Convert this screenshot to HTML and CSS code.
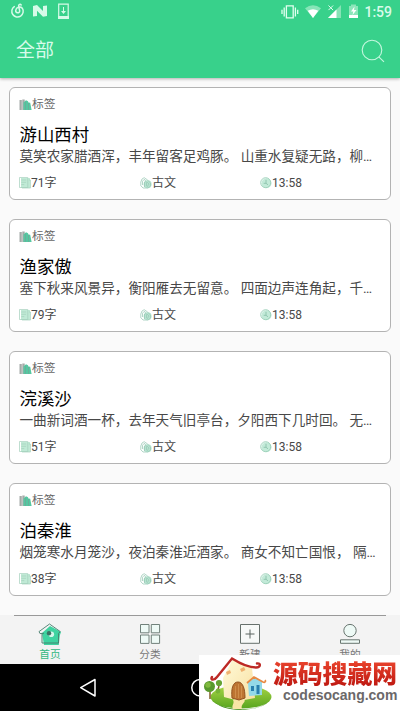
FILE: index.html
```
<!DOCTYPE html>
<html lang="zh-CN">
<head>
<meta charset="utf-8">
<title>全部</title>
<link rel="stylesheet" href="styles.css">
</head>
<body>
<svg class="defs" aria-hidden="true">
  <symbol id="tag" viewBox="0 0 13 12">
    <path d="M.5 1h2.3v10H.5zM3.3.5h2.4V11H3.3z" fill="#a5aaa8"/>
    <path d="M4.5 3.5 7 1.2l2 1 .4 1.3 1.8.2L12.6 11H4.5z" fill="#55c7a1"/>
    <path d="M6.5 3v8M9.5 4v7" stroke="#7c9990" stroke-width=".5"/>
  </symbol>
  <symbol id="words" viewBox="0 0 12 12">
    <path d="M2 1h9v10H2z" fill="#c0ead6"/>
    <path d="M.5.5h8.3v10H.5zM2.3 3h4.8M2.3 5.3h4.8M2.3 7.6h3M10 3h1.5v8H3" fill="none" stroke="#a3d0bb" stroke-width=".7"/>
  </symbol>
  <symbol id="kind" viewBox="0 0 12 12">
    <circle cx="7.6" cy="7.3" r="4" fill="#b5e3cf"/>
    <path d="M4.2.7 7 2.6 10.5 6v3L8 11H3L.8 8.7V5L2 2zM2.5 8V4.2l2-2 2 3.5V9M4.5 5v5M7 5l2 2-2 3" fill="none" stroke="#9ac8b5" stroke-width=".75"/>
  </symbol>
  <symbol id="clock" viewBox="0 0 12 12">
    <circle cx="6.5" cy="6.3" r="5" fill="#c2ead8"/>
    <circle cx="5.7" cy="5.7" r="5" fill="none" stroke="#9bcfb8" stroke-width=".9"/>
    <path d="M6 2.8v3.5H3.7M6 6.3l2 1.5" fill="none" stroke="#8cc2ab" stroke-width=".9"/>
  </symbol>
</svg>
<div class="screen">
  <header class="top">
    <div class="status">
      <svg class="status-left" viewBox="0 0 64 20" width="64" height="20">
        <g fill="none" stroke="#d6fae8" stroke-width="1.5" stroke-linecap="round">
          <path d="M5.3 6.6A5.7 5.7 0 1 0 13.3 8.2C11.6 6.3 7.2 7 6.7 10.3c-.3 3 4 3.4 4 .6L9.6 6.1c-.2-1.7 1.7-2.2 2.6-1.2"/>
        </g>
        <path d="M24 6l4-1 6 6V6l4-.5V16l-4 .8-6-6V16l-4 .5z" fill="#d6fae8"/>
        <path d="M49.7 4.2h9.5v14h-9.5z" fill="none" stroke="#d6fae8" stroke-width="1.2"/>
        <path d="M49 16h11v3H49zM54 7h1v4h2l-2.5 3L52 11h2z" fill="#d6fae8"/>
      </svg>
      <svg class="status-right" viewBox="0 0 80 20" width="80" height="20">
        <path d="M6.4 5.8h6.8v12H6.4zM4.2 7.5v9M15.4 7.5v9M2 9.8v4.2M17.7 9.8v4.2" fill="none" stroke="#e2fff0" stroke-width="1.3"/>
        <path d="M25 8.3q8-6 16 0L33 18z" fill="#87e5b8"/>
        <path d="M27.7 10.7q5.3-3 10.6 0L33 18z" fill="#fff"/>
        <path d="M61 5v13H48z" fill="#86e3b6"/>
        <path d="M56.5 9.5V18H48z" fill="#fff"/>
        <path d="m48.5 5.5 4.6 4.6m0-4.6-4.6 4.6" stroke="#e2fff0"/>
        <path d="M69 6h2V4.5h5V6h2v12h-9z" fill="#8ce6ba"/>
        <path d="M69 15h9v3h-9zM74.5 6.5 71 11.5h2.3l-.8 3.5 4-5H74z" fill="#fff"/>
      </svg>
      <span class="time">1:59</span>
    </div>
    <div class="toolbar">
      <h1>全部</h1>
      <svg width="24" height="24" viewBox="0 0 24 24"><circle cx="11" cy="11" r="9.8"/><path d="m17.8 17.8 5.2 5"/></svg>
    </div>
  </header>
  <main class="list">
    <article class="card">
      <div class="tag"><svg><use href="#tag"/></svg>标签</div>
      <h2>游山西村</h2>
      <p>莫笑农家腊酒浑，丰年留客足鸡豚。 山重水复疑无路，柳…</p>
      <div class="meta"><span><svg><use href="#words"/></svg>71字</span><span><svg><use href="#kind"/></svg>古文</span><span><svg><use href="#clock"/></svg>13:58</span></div>
    </article>
    <article class="card">
      <div class="tag"><svg><use href="#tag"/></svg>标签</div>
      <h2>渔家傲</h2>
      <p>塞下秋来风景异，衡阳雁去无留意。 四面边声连角起，千…</p>
      <div class="meta"><span><svg><use href="#words"/></svg>79字</span><span><svg><use href="#kind"/></svg>古文</span><span><svg><use href="#clock"/></svg>13:58</span></div>
    </article>
    <article class="card">
      <div class="tag"><svg><use href="#tag"/></svg>标签</div>
      <h2>浣溪沙</h2>
      <p>一曲新词酒一杯，去年天气旧亭台，夕阳西下几时回。 无…</p>
      <div class="meta"><span><svg><use href="#words"/></svg>51字</span><span><svg><use href="#kind"/></svg>古文</span><span><svg><use href="#clock"/></svg>13:58</span></div>
    </article>
    <article class="card">
      <div class="tag"><svg><use href="#tag"/></svg>标签</div>
      <h2>泊秦淮</h2>
      <p>烟笼寒水月笼沙，夜泊秦淮近酒家。 商女不知亡国恨， 隔…</p>
      <div class="meta"><span><svg><use href="#words"/></svg>38字</span><span><svg><use href="#kind"/></svg>古文</span><span><svg><use href="#clock"/></svg>13:58</span></div>
    </article>
  </main>
  <nav class="tabs">
    <a class="active">
      <svg viewBox="0 0 24 22">
        <path d="M4 10 12 3l11 6-1.2 3.5-1 9.5H6z" fill="#3fd3a0"/>
        <path d="M1 8.6 11.5 1 22.3 8.6 20.5 10.4V20H4V10.4L2 10.6zM4 10.4h2" fill="none" stroke="#477e6d" stroke-width=".9"/>
        <circle cx="13.3" cy="11.2" r="2.8" fill="#d4f7ea"/><circle cx="11" cy="10.2" r="2.2" fill="#3b7263"/>
      </svg>首页</a>
    <a>
      <svg viewBox="0 0 24 22"><path d="M2.5 1.5H11v8.3H2.5zM13.3 1.5h8.3v8.3h-8.3zM2.5 12H11v8.4H2.5zM13.3 12h8.3v8.4h-8.3z" fill="#eefaf6" stroke="#71817b"/></svg>分类</a>
    <a>
      <svg viewBox="0 0 24 22"><path d="M2.5 1.5h19v18.8h-19z" fill="#f7f9f8" stroke="#66706c"/><path d="M12 6.5v9M7.5 11h9" stroke="#58635e"/></svg>新建</a>
    <a>
      <svg viewBox="0 0 24 22"><g fill="#eefaf6" stroke="#68756f"><circle cx="12" cy="7.6" r="6.2"/><path d="M2.5 16.8h19v3.5h-19z"/></g></svg>我的</a>
  </nav>
  <div class="system">
    <svg viewBox="0 0 400 47" width="400" height="47"><g fill="none" stroke="#fff" stroke-width="1.5" stroke-linejoin="round"><path d="M95 15.5v16.5L80.7 23.7z"/><circle cx="200" cy="23.7" r="8.2"/></g></svg>
  </div>
  <div class="watermark">
    <svg viewBox="0 0 74 56" width="74" height="56">
      <defs>
        <linearGradient id="wall" x2="1" y2="1"><stop stop-color="#fffbd9"/><stop offset="1" stop-color="#f8dfa1"/></linearGradient>
        <linearGradient id="grass" x2="0" y2="1"><stop stop-color="#a8d545"/><stop offset="1" stop-color="#58a51f"/></linearGradient>
      </defs>
      <ellipse cx="42" cy="42" rx="30.5" ry="11.5" fill="url(#grass)"/>
      <path d="M13 44c7 12 45 14 56 3-7 9-46 13-56-3z" fill="#438e1b"/>
      <path d="M24 23 34 4l19 9 3 30-16 3-15-4z" fill="url(#wall)"/>
      <path d="M34 54c-2-4 2-5 0-9l11-1c3 3-4 5-2 10z" fill="#f8e5a6"/>
      <path d="M33 43c-1-10 1-16 6-16s7 7 7 16l-6 2z" fill="#bd7432" stroke="#935220"/>
      <path d="M36.5 31v12M39.5 29v14M42.5 31v12" stroke="#d79855" stroke-width=".7"/>
      <path d="m27 17 4-2 1 3-4 2zM41 14l4-2 1.5 3-4 2z" fill="#efb16f"/>
      <path d="M49 28 56 22l7 5v13l-13 1z" fill="#93d9e8"/>
      <path d="M52 31h3v5h-3zM57.5 30h3v9h-3z" fill="#287fae"/>
      <path d="m48 28 7-6 9 5c2 1 3-1 2-2" fill="none" stroke="#e68943" stroke-width="1.7"/>
      <path d="M13 22c-2 3 2 4 5 0L33 3.5c8 5 16 9 24 9 5 0 5-5 1-4" fill="none" stroke="#bd2925" stroke-width="2.4" stroke-linecap="round"/>
      <path d="M11 34v10M20 31l-2 7" stroke="#815d29" stroke-width="1.5"/>
      <circle cx="10.5" cy="31.5" r="5.5" fill="#58992d"/><circle cx="9" cy="30" r="2.7" fill="#80b93f"/><circle cx="20" cy="28" r="3.1" fill="#66a332"/><circle cx="19" cy="36" r="2.4" fill="#76b436"/>
    </svg>
    <div class="brand"><strong>源码搜藏网</strong><span>codesocang.com</span></div>
  </div>
</div>
</body>
</html>
```
FILE: styles.css
```
* { box-sizing: border-box; }
body { margin: 0; font-family: Roboto, "Noto Sans CJK SC", sans-serif; }
h1, h2, p { margin: 0; font-weight: 400; }
.defs { position: absolute; width: 0; height: 0; }
.screen { position: relative; width: 400px; height: 711px; display: flex; flex-direction: column; overflow: hidden; background: #fafafa; }
.top { height: 78px; flex: none; background: #38d18b; color: #d8fbea; box-shadow: 0 1px 3px rgba(0,0,0,.3); }
.status { height: 24px; display: flex; align-items: flex-start; padding: 0 8px 0 9px; }
.status-right { margin-left: 207px; }
.time { margin-left: auto; font-size: 14px; font-weight: 500; line-height: 24px; }
.toolbar { height: 54px; display: flex; align-items: center; justify-content: space-between; padding: 0 15px 0 16px; }
.toolbar h1 { font-size: 19px; line-height: 28px; }
.toolbar svg { fill: none; stroke: #c5f7df; stroke-width: 1.1; }
.list { height: 537px; flex: none; padding: 9px 9px 0; display: flex; flex-direction: column; gap: 19px; overflow: hidden; }
.card { height: 113px; flex: none; padding: 6px 9px 0 10px; background: #fff; border: 1px solid #b3b3b3; border-radius: 6px; color: #484848; }
.tag { height: 20px; display: flex; align-items: center; font-size: 11.7px; line-height: 18px; color: #666; }
.tag svg { width: 13px; height: 12px; margin: 2px 0 0 -1px; }
.card h2 { height: 20px; margin: 11px 0 0 -.5px; font-size: 17.4px; line-height: 20px; color: #000; }
.card p { height: 20px; margin: 1px 0 0 -.5px; font-size: 13.62px; line-height: 20px; white-space: nowrap; }
.meta { display: grid; grid-template-columns: 121px 120px 1fr; margin: 8px 0 0 -1px; font-size: 12px; line-height: 18px; }
.meta span { display: flex; align-items: center; }
.meta svg { width: 12px; height: 12px; }
.tabs { height: 49px; flex: none; display: grid; grid-template-columns: repeat(4, 1fr); background: linear-gradient(#999, #999) 14px 0 / 372px 1px no-repeat #f3f3f3; }
.tabs a { display: flex; flex-direction: column; align-items: center; padding-top: 8px; font-size: 10.7px; line-height: 19px; color: #777; }
.tabs svg { width: 24px; height: 22px; }
.tabs .active { color: #32b882; }
.system { height: 47px; flex: none; background: #000; }
.watermark { position: absolute; left: 199px; top: 655px; width: 201px; height: 56px; display: flex; background: #fff; }
.watermark svg { flex: none; }
.brand { display: flex; flex-direction: column; align-items: flex-start; white-space: nowrap; }
.brand strong { margin-top: 2px; font: 900 24.8px/30px "Noto Sans CJK SC", sans-serif; color: transparent; background: linear-gradient(#f04a31, #bd1710); background-clip: text; -webkit-background-clip: text; }
.brand span { margin-left: 10px; font: bold 14px/16px "Liberation Sans", sans-serif; color: #6b6869; }
```
